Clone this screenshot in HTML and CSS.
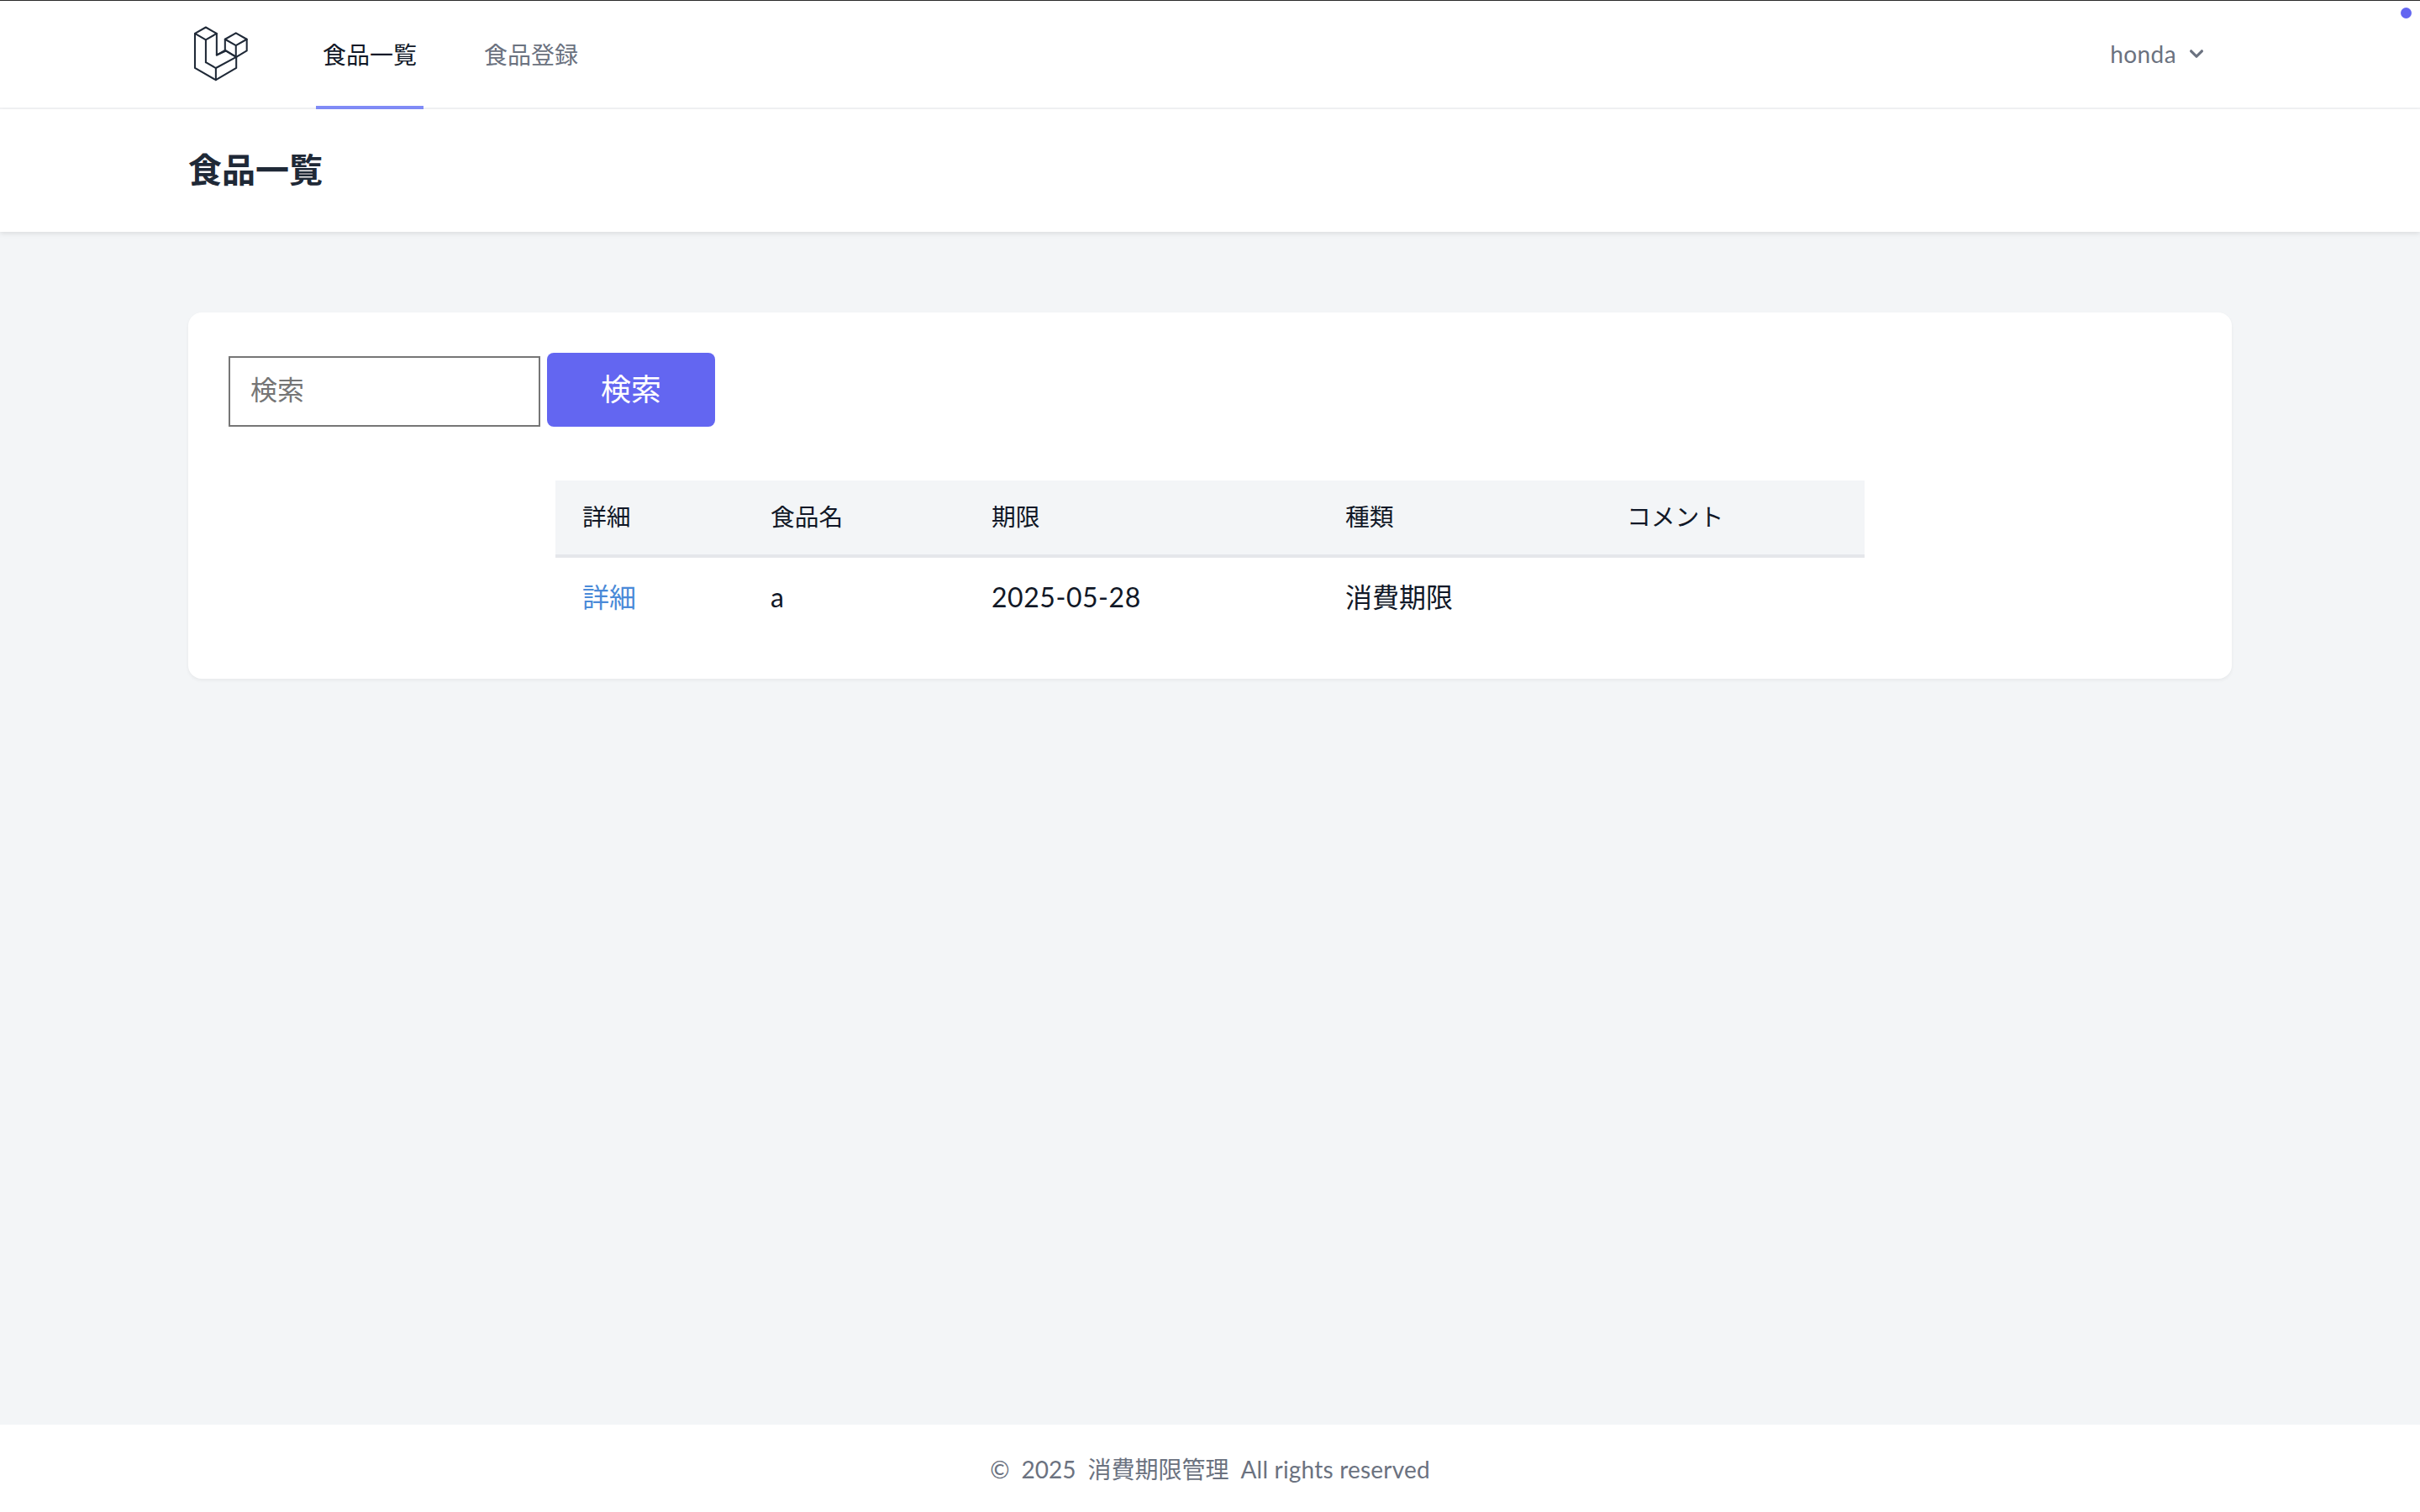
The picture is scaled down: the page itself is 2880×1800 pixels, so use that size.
FILE: index.html
```html
<!DOCTYPE html>
<html lang="ja">
<head>
  <meta charset="utf-8">
  <meta name="viewport" content="width=device-width, initial-scale=1">
  <title>食品一覧</title>
  <link rel="stylesheet" href="styles.css">
</head>
<body>
  <span class="status-dot"></span>
  <nav class="topnav">
    <div class="topnav-inner">
      <div class="topnav-left">
        <a class="logo" href="#">
          <svg viewBox="0 0 316 316" width="72" height="72" fill="none" stroke="currentColor" stroke-width="9" stroke-linejoin="round" stroke-linecap="round">
            <path d="M35 52.5 91.8 19.7 148.6 52.5V164.8L192.3 139.6V82.3L249.1 49.5 305.9 82.3V142.2L251 174.9V232.2L144.3 295 35 232.2Z"/>
            <path d="M35 52.5 91.8 85.3 148.6 52.5M91.8 85.3V202.5"/>
            <path d="M91.8 202.5 144.3 232.7 251 174.9 196.7 142.5 148.6 164.8M144.3 232.7V295"/>
            <path d="M192.3 82.3 249.1 115 305.9 82.3M249.1 115V172.3M192.3 139.6 251 174.9"/>
          </svg>
        </a>
        <ul class="nav-links">
          <li><a class="nav-link current" href="#">食品一覧</a></li>
          <li><a class="nav-link" href="#">食品登録</a></li>
        </ul>
      </div>
      <button class="user-menu" type="button">
        <span class="user-name">honda</span>
        <svg viewBox="0 0 20 20" width="32" height="32" fill="currentColor">
          <path fill-rule="evenodd" clip-rule="evenodd" d="M5.293 7.293a1 1 0 011.414 0L10 10.586l3.293-3.293a1 1 0 111.414 1.414l-4 4a1 1 0 01-1.414 0l-4-4a1 1 0 010-1.414z"/>
        </svg>
      </button>
    </div>
  </nav>

  <header class="page-header">
    <h1>食品一覧</h1>
  </header>

  <main class="content">
    <section class="card">
      <form class="search">
        <input class="search-input" type="text" placeholder="検索">
        <button class="search-btn" type="button">検索</button>
      </form>
      <table class="food-table">
        <thead>
          <tr>
            <th>詳細</th>
            <th>食品名</th>
            <th>期限</th>
            <th>種類</th>
            <th>コメント</th>
          </tr>
        </thead>
        <tbody>
          <tr>
            <td><a class="detail-link" href="#">詳細</a></td>
            <td>a</td>
            <td class="date">2025-05-28</td>
            <td>消費期限</td>
            <td></td>
          </tr>
        </tbody>
      </table>
    </section>
  </main>

  <footer class="footer">
    <p><span>©</span><span>2025</span><span>消費期限管理</span><span class="rights">All rights reserved</span></p>
  </footer>
</body>
</html>
```

FILE: styles.css
```css
/* layout for the food list page */
* {
  box-sizing: border-box;
}
body {
  margin: 0;
  min-height: 100vh;
  display: flex;
  flex-direction: column;
  background-color: #f3f5f7;
  color: #111827;
  font-family: Lato, "Noto Sans CJK JP", sans-serif;
}
a {
  text-decoration: none;
}
.status-dot {
  position: absolute;
  top: 9px;
  right: 10px;
  width: 13px;
  height: 13px;
  border-radius: 50%;
  background-color: #6366f1;
}
.topnav {
  height: 130px;
  background-color: #fff;
  border-bottom: 2px solid #f3f4f6;
  box-shadow: inset 0 1px 0 #2b2b2b;
}
.topnav-inner {
  width: 2432px;
  height: 128px;
  margin: 0 auto;
  display: flex;
  justify-content: space-between;
  align-items: center;
}
.topnav-left {
  display: flex;
  align-items: center;
  height: 100%;
}
.logo {
  display: block;
  height: 72px;
  color: #1f2937;
}
.logo svg {
  display: block;
}
.nav-links {
  list-style-type: none;
  margin: 0 0 0 80px;
  padding: 0;
  display: flex;
  gap: 64px;
  height: 100%;
}
.nav-links li {
  height: 130px;
}
.nav-link {
  display: flex;
  align-items: center;
  height: 100%;
  padding: 2px 8px 0;
  border-bottom: 4px solid transparent;
  color: #6b7280;
  font-size: 28px;
}
.nav-link.current {
  color: #111827;
  border-bottom-color: #818cf8;
}
.user-menu {
  display: flex;
  align-items: center;
  gap: 8px;
  padding: 0 26px 0 0;
  border: 0;
  background: none;
  color: #6b7280;
  font: inherit;
  font-size: 28px;
}
.user-name {
  letter-spacing: 0.4px;
}
.page-header {
  height: 146px;
  padding: 47px 224px;
  background-color: #fff;
  box-shadow: 0 2px 6px rgba(0, 0, 0, 0.1);
}
.page-header h1 {
  margin: 0;
  color: #1f2937;
  font-size: 40px;
  font-weight: 600;
  line-height: 50px;
}
.content {
  flex: 1;
  padding: 96px 224px;
}
.card {
  padding: 48px;
  background-color: #fff;
  border-radius: 16px;
  box-shadow: 0 2px 4px rgba(0, 0, 0, 0.05);
}
.search {
  display: flex;
  align-items: flex-end;
  gap: 8px;
}
.search-input {
  width: 371px;
  height: 84px;
  padding: 0 24px 5px;
  border: 2px solid #767676;
  font: inherit;
  font-size: 32px;
}
.search-input::placeholder {
  color: #757575;
}
.search-btn {
  width: 200px;
  height: 88px;
  padding: 0 0 6px;
  border: 0;
  border-radius: 8px;
  background-color: #6366f1;
  color: #fff;
  font: inherit;
  font-size: 36px;
}
.food-table {
  width: 1558px;
  margin: 64px auto 0;
  border-collapse: collapse;
  table-layout: fixed;
}
.food-table th {
  padding: 23px 32px 25px;
  background-color: #f3f5f7;
  border-bottom: 4px solid #e5e7eb;
  font-size: 28.8px;
  font-weight: 400;
  line-height: 40px;
  text-align: left;
}
.food-table td {
  height: 96px;
  padding: 23px 32px 25px;
  font-size: 32px;
  line-height: 48px;
}
.food-table th:nth-child(1) {
  width: 224px;
}
.food-table th:nth-child(2) {
  width: 263px;
}
.food-table th:nth-child(3) {
  width: 421px;
}
.food-table th:nth-child(4) {
  width: 335px;
}
.food-table .date {
  letter-spacing: 0.55px;
}
.detail-link {
  color: #4a8ad8;
}
.footer {
  height: 104px;
  display: flex;
  align-items: center;
  justify-content: center;
  background-color: #fff;
  color: #6b7280;
  font-size: 28px;
}
.footer p {
  margin: 0;
  display: flex;
  align-items: baseline;
  gap: 14px;
}
.rights {
  letter-spacing: 0.2px;
}
```
